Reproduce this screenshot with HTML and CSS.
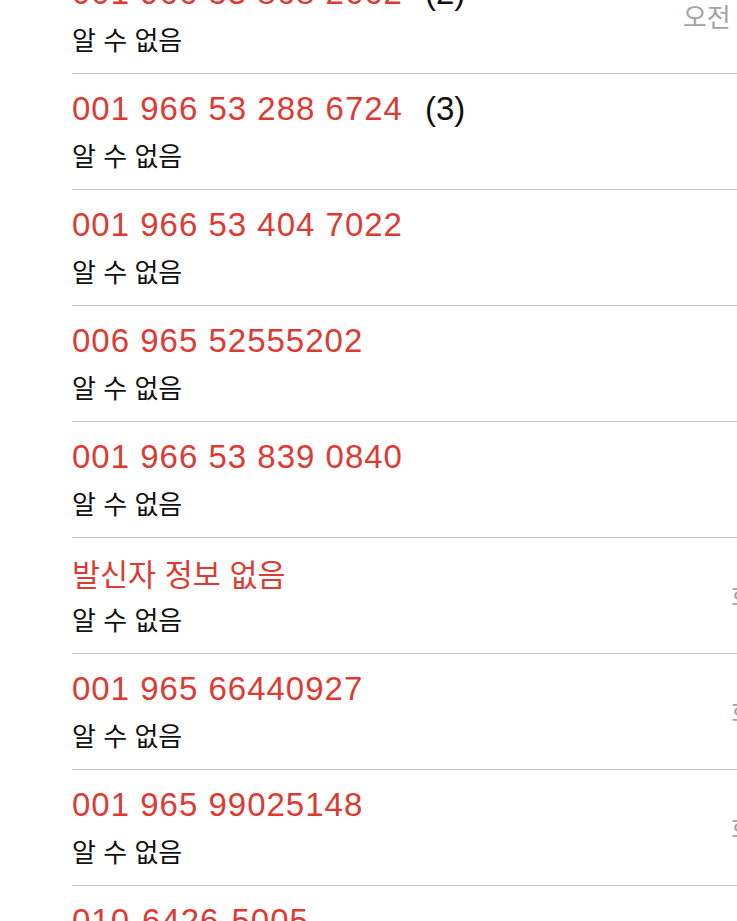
FILE: index.html
```html
<!DOCTYPE html>
<html lang="ko">
<head>
<meta charset="utf-8">
<title>최근 통화</title>
<link rel="stylesheet" href="styles.css">
</head>
<body>
<ul class="list">
  <li class="row">
    <div class="info">
      <div class="title"><span class="num">001 966 53 868 2662</span><span class="count">(2)</span></div>
      <div class="sub">알 수 없음</div>
    </div>
    <div class="time">오전 10:45</div>
  </li>
  <li class="row">
    <div class="info">
      <div class="title"><span class="num">001 966 53 288 6724</span><span class="count">(3)</span></div>
      <div class="sub">알 수 없음</div>
    </div>
    <div class="time">어제</div>
  </li>
  <li class="row">
    <div class="info">
      <div class="title"><span class="num">001 966 53 404 7022</span></div>
      <div class="sub">알 수 없음</div>
    </div>
    <div class="time">어제</div>
  </li>
  <li class="row">
    <div class="info">
      <div class="title"><span class="num">006 965 52555202</span></div>
      <div class="sub">알 수 없음</div>
    </div>
    <div class="time">어제</div>
  </li>
  <li class="row">
    <div class="info">
      <div class="title"><span class="num">001 966 53 839 0840</span></div>
      <div class="sub">알 수 없음</div>
    </div>
    <div class="time">어제</div>
  </li>
  <li class="row">
    <div class="info">
      <div class="title"><span class="name">발신자 정보 없음</span></div>
      <div class="sub">알 수 없음</div>
    </div>
    <div class="time">화요일</div>
  </li>
  <li class="row">
    <div class="info">
      <div class="title"><span class="num">001 965 66440927</span></div>
      <div class="sub">알 수 없음</div>
    </div>
    <div class="time">화요일</div>
  </li>
  <li class="row">
    <div class="info">
      <div class="title"><span class="num">001 965 99025148</span></div>
      <div class="sub">알 수 없음</div>
    </div>
    <div class="time">화요일</div>
  </li>
  <li class="row">
    <div class="info">
      <div class="title"><span class="num">010-6426-5005</span></div>
      <div class="sub">알 수 없음</div>
    </div>
    <div class="time">월요일</div>
  </li>
</ul>
</body>
</html>
```
FILE: styles.css
```css
html, body {
  margin: 0;
  padding: 0;
  background: #ffffff;
  overflow: hidden;
}

body {
  width: 737px;
  height: 921px;
}

.list {
  list-style: none;
  margin: -42px 0 0 0;
  padding: 0 0 0 72px;
}

.row {
  display: flex;
  align-items: center;
  width: 737px;
  height: 115px;
  border-bottom: 1px solid #c4c4c6;
  box-sizing: content-box;
}

.info {
  display: flex;
  flex-direction: column;
  align-self: flex-start;
  padding-top: 18px;
}

.title {
  display: flex;
  align-items: baseline;
  height: 34px;
  line-height: 34px;
  white-space: nowrap;
}

.num {
  font-family: "Liberation Sans", Arial, sans-serif;
  font-size: 33px;
  letter-spacing: 1px;
  color: #dc3b34;
}

.name {
  font-family: "Noto Sans CJK KR", sans-serif;
  font-size: 30.5px;
  color: #dc3b34;
}

.count {
  font-family: "Liberation Sans", Arial, sans-serif;
  font-size: 33px;
  color: #111111;
  margin-left: 22px;
}

.sub {
  font-family: "Noto Sans CJK KR", sans-serif;
  font-size: 26px;
  line-height: 30px;
  margin-top: 14px;
  color: #111111;
  white-space: nowrap;
}

.time {
  margin-left: auto;
  margin-right: 6px;
  font-family: "Noto Sans CJK KR", sans-serif;
  font-size: 26px;
  color: #a3a3a8;
  white-space: nowrap;
}
```
